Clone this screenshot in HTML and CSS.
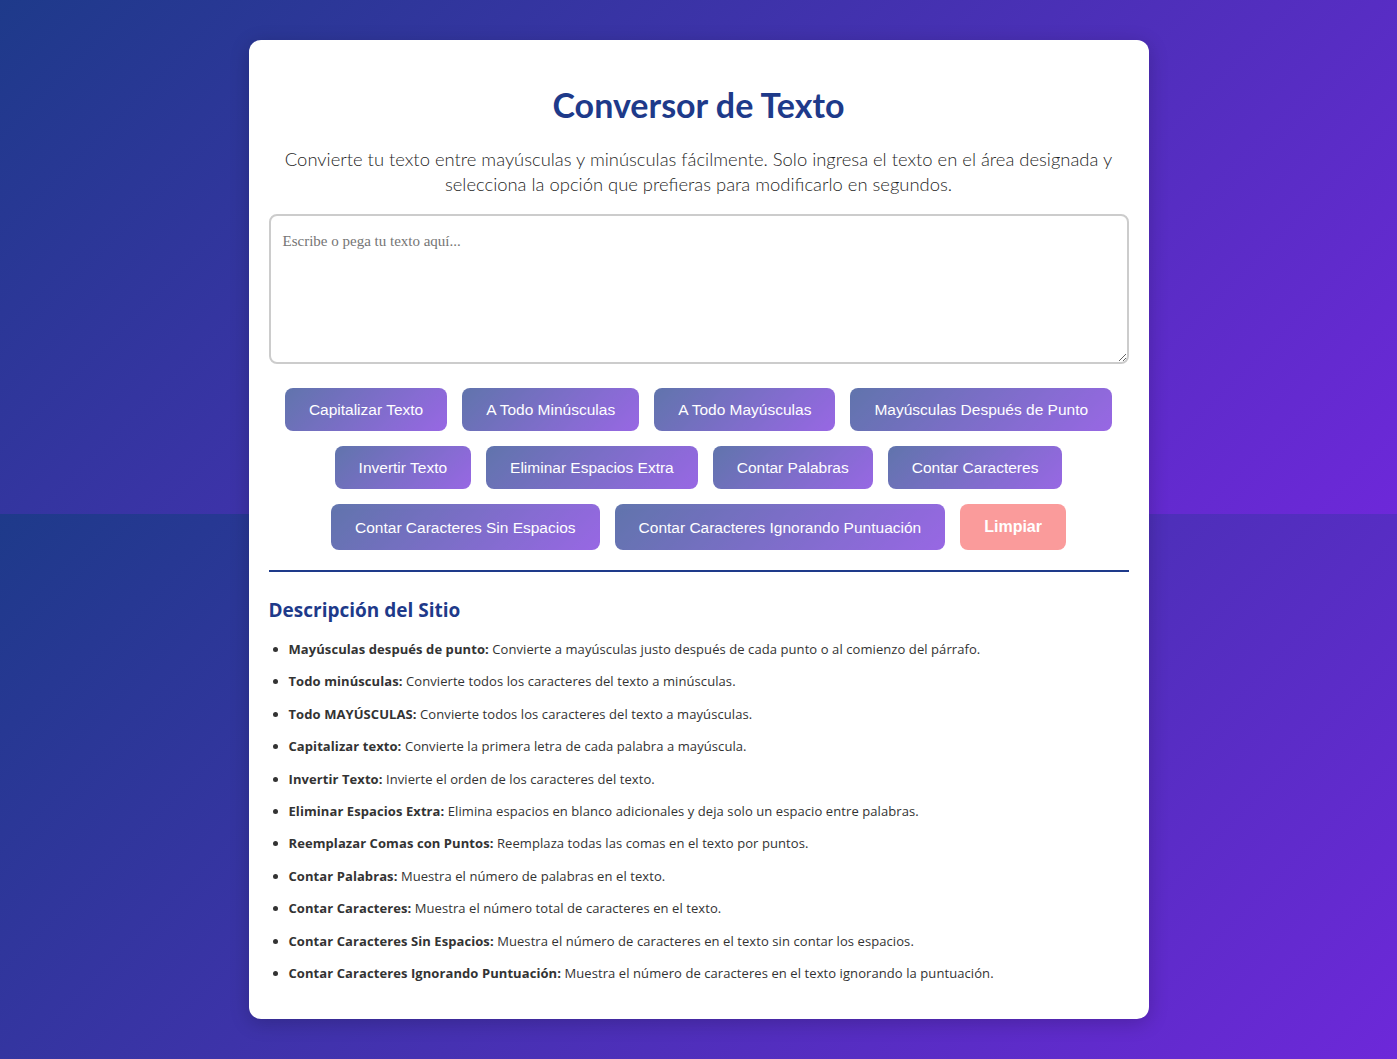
FILE: index.html
```html
<!DOCTYPE html>
<html lang="es">
<head>
<meta charset="utf-8">
<title>Conversor de Texto</title>
<link rel="stylesheet" href="styles.css">
</head>
<body>
<main class="card">
  <h1 class="title">Conversor de Texto</h1>
  <p class="intro">Convierte tu texto entre mayúsculas y minúsculas fácilmente. Solo ingresa el texto en el área designada y selecciona la opción que prefieras para modificarlo en segundos.</p>
  <textarea class="input" placeholder="Escribe o pega tu texto aquí..."></textarea>
  <div class="actions">
    <button class="btn" disabled>Capitalizar Texto</button>
    <button class="btn" disabled>A Todo Minúsculas</button>
    <button class="btn" disabled>A Todo Mayúsculas</button>
    <button class="btn" disabled>Mayúsculas Después de Punto</button>
    <button class="btn" disabled>Invertir Texto</button>
    <button class="btn" disabled>Eliminar Espacios Extra</button>
    <button class="btn" disabled>Contar Palabras</button>
    <button class="btn" disabled>Contar Caracteres</button>
    <button class="btn" disabled>Contar Caracteres Sin Espacios</button>
    <button class="btn" disabled>Contar Caracteres Ignorando Puntuación</button>
    <button class="btn btn-clear" disabled>Limpiar</button>
  </div>
  <hr class="divider">
  <section class="about">
    <h2 class="about-title">Descripción del Sitio</h2>
    <ul class="about-list">
      <li><strong>Mayúsculas después de punto:</strong> Convierte a mayúsculas justo después de cada punto o al comienzo del párrafo.</li>
      <li><strong>Todo minúsculas:</strong> Convierte todos los caracteres del texto a minúsculas.</li>
      <li><strong>Todo MAYÚSCULAS:</strong> Convierte todos los caracteres del texto a mayúsculas.</li>
      <li><strong>Capitalizar texto:</strong> Convierte la primera letra de cada palabra a mayúscula.</li>
      <li><strong>Invertir Texto:</strong> Invierte el orden de los caracteres del texto.</li>
      <li><strong>Eliminar Espacios Extra:</strong> Elimina espacios en blanco adicionales y deja solo un espacio entre palabras.</li>
      <li><strong>Reemplazar Comas con Puntos:</strong> Reemplaza todas las comas en el texto por puntos.</li>
      <li><strong>Contar Palabras:</strong> Muestra el número de palabras en el texto.</li>
      <li><strong>Contar Caracteres:</strong> Muestra el número total de caracteres en el texto.</li>
      <li><strong>Contar Caracteres Sin Espacios:</strong> Muestra el número de caracteres en el texto sin contar los espacios.</li>
      <li><strong>Contar Caracteres Ignorando Puntuación:</strong> Muestra el número de caracteres en el texto ignorando la puntuación.</li>
    </ul>
  </section>
</main>
</body>
</html>
```

FILE: styles.css
```css
html {
  background:
    linear-gradient(135deg, #1e3a8a, #6d28d9) top left / 100% 514px no-repeat,
    linear-gradient(135deg, #1e3a8a, #6d28d9) bottom left / 100% 545px no-repeat;
  background-color: #4a30b0;
  min-height: 100%;
}

body {
  margin: 0;
  padding: 40px 0;
  font-family: "Open Sans", "Noto Sans", sans-serif;
  color: #333;
}

.card {
  box-sizing: border-box;
  width: 900px;
  margin: 0 auto;
  background: #fff;
  border-radius: 12px;
  padding: 20px 20px 25px;
  box-shadow: 0 4px 20px rgba(0, 0, 0, 0.2);
}

.title {
  margin: 26px 0 0;
  text-align: center;
  font-family: "Lato", sans-serif;
  font-weight: 700;
  font-size: 34px;
  line-height: 38px;
  color: #1e3a8a;
}

.intro {
  margin: 23px 0 0;
  text-align: center;
  font-family: "Lato", sans-serif;
  font-weight: 300;
  font-size: 18.4px;
  line-height: 25px;
  color: #1f1f1f;
}

.input {
  display: block;
  box-sizing: border-box;
  width: 100%;
  height: 150px;
  margin-top: 17px;
  padding: 15px 12px;
  border: 2px solid #ccc;
  border-radius: 8px;
  font-family: "Liberation Serif", serif;
  font-size: 15px;
  line-height: 20px;
  color: #333;
  resize: vertical;
  outline: none;
}

.input::placeholder {
  color: #757575;
}

.actions {
  display: flex;
  flex-wrap: wrap;
  justify-content: center;
  gap: 15px;
  margin-top: 24px;
}

.btn {
  padding: 12px 24px;
  border: none;
  border-radius: 8px;
  background: linear-gradient(135deg, #1e3a8a, #6d28d9);
  color: #fff;
  font-family: "Liberation Sans", Arial, sans-serif;
  font-size: 15.5px;
  line-height: 19px;
  opacity: 0.7;
  cursor: pointer;
}

.btn-clear {
  background: #f87171;
  font-size: 16px;
  font-weight: 700;
  line-height: 22px;
}

.divider {
  margin: 20px 0 0;
  border: none;
  height: 2px;
  background: #1e3a8a;
}

.about-title {
  margin: 26px 0 0;
  font-family: "Open Sans", sans-serif;
  font-weight: 700;
  font-size: 19px;
  line-height: 24px;
  color: #1e3a8a;
}

.about-list {
  margin: 16px 0 0;
  padding-left: 20px;
  font-size: 13px;
  line-height: 22.4px;
  letter-spacing: 0.08px;
  color: #333;
}

.about-list li {
  margin-bottom: 10px;
}

.about-list strong {
  font-weight: 700;
}
```
